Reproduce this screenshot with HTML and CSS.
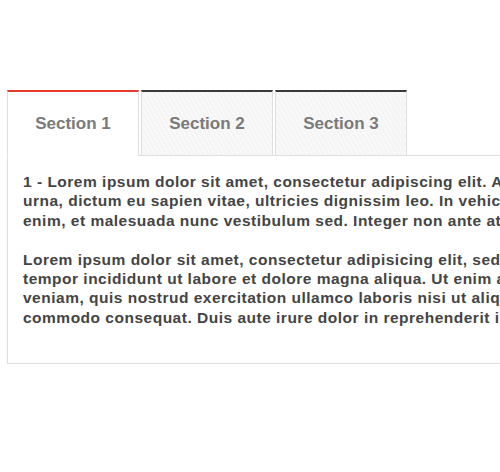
FILE: index.html
```html
<!DOCTYPE html>
<html lang="en">
<head>
<meta charset="utf-8">
<title>Tabs</title>
<link rel="stylesheet" href="styles.css">
</head>
<body>
<div class="tabs">
  <ul class="tab-list">
    <li class="tab active">Section 1</li>
    <li class="tab">Section 2</li>
    <li class="tab">Section 3</li>
  </ul>
  <div class="panel">
    <p>1 - Lorem ipsum dolor sit amet, consectetur adipiscing elit. Aliquam nec<br>urna, dictum eu sapien vitae, ultricies dignissim leo. In vehicula tellus<br>enim, et malesuada nunc vestibulum sed. Integer non ante at nisi.</p>
    <p>Lorem ipsum dolor sit amet, consectetur adipisicing elit, sed do eiusmod<br>tempor incididunt ut labore et dolore magna aliqua. Ut enim ad minim<br>veniam, quis nostrud exercitation ullamco laboris nisi ut aliquip ex ea<br>commodo consequat. Duis aute irure dolor in reprehenderit in voluptate.</p>
  </div>
</div>
</body>
</html>
```
FILE: styles.css
```css
html, body {
  margin: 0;
  padding: 0;
  overflow: hidden;
  background: #fff;
}
body {
  font-family: "Liberation Sans", Arial, sans-serif;
}
.tabs {
  width: 760px;
  padding: 90px 0 0 7px;
}
.tab-list {
  list-style: none;
  margin: 0;
  padding: 0;
  display: flex;
  gap: 2px;
  position: relative;
  z-index: 1;
}
.tab {
  box-sizing: border-box;
  width: 132px;
  height: 66px;
  display: flex;
  align-items: center;
  justify-content: center;
  font-size: 17px;
  font-weight: bold;
  color: #7a7a7a;
  background-color: #f5f5f5;
  background-image: repeating-linear-gradient(60deg, rgba(255,255,255,0) 0 3px, rgba(255,255,255,0.6) 3px 4px);
  border-top: 2px solid #3a3a3a;
  border-left: 1px solid #dedede;
  border-right: 1px solid #dedede;
  border-bottom: 1px solid #dedede;
}
.tab.active {
  background: #fff;
  border-top-color: #e8392c;
  border-bottom-color: #fff;
}
.panel {
  margin-top: -1px;
  border: 1px solid #dedede;
  box-shadow: 0 1px 1px rgba(0,0,0,0.06);
  padding: 16px 15px 16px;
  background: #fff;
}
.panel p {
  margin: 0 0 20px;
  font-size: 15.5px;
  letter-spacing: 0.5px;
  line-height: 19.3px;
  font-weight: bold;
  color: #444;
  white-space: nowrap;
}
```
